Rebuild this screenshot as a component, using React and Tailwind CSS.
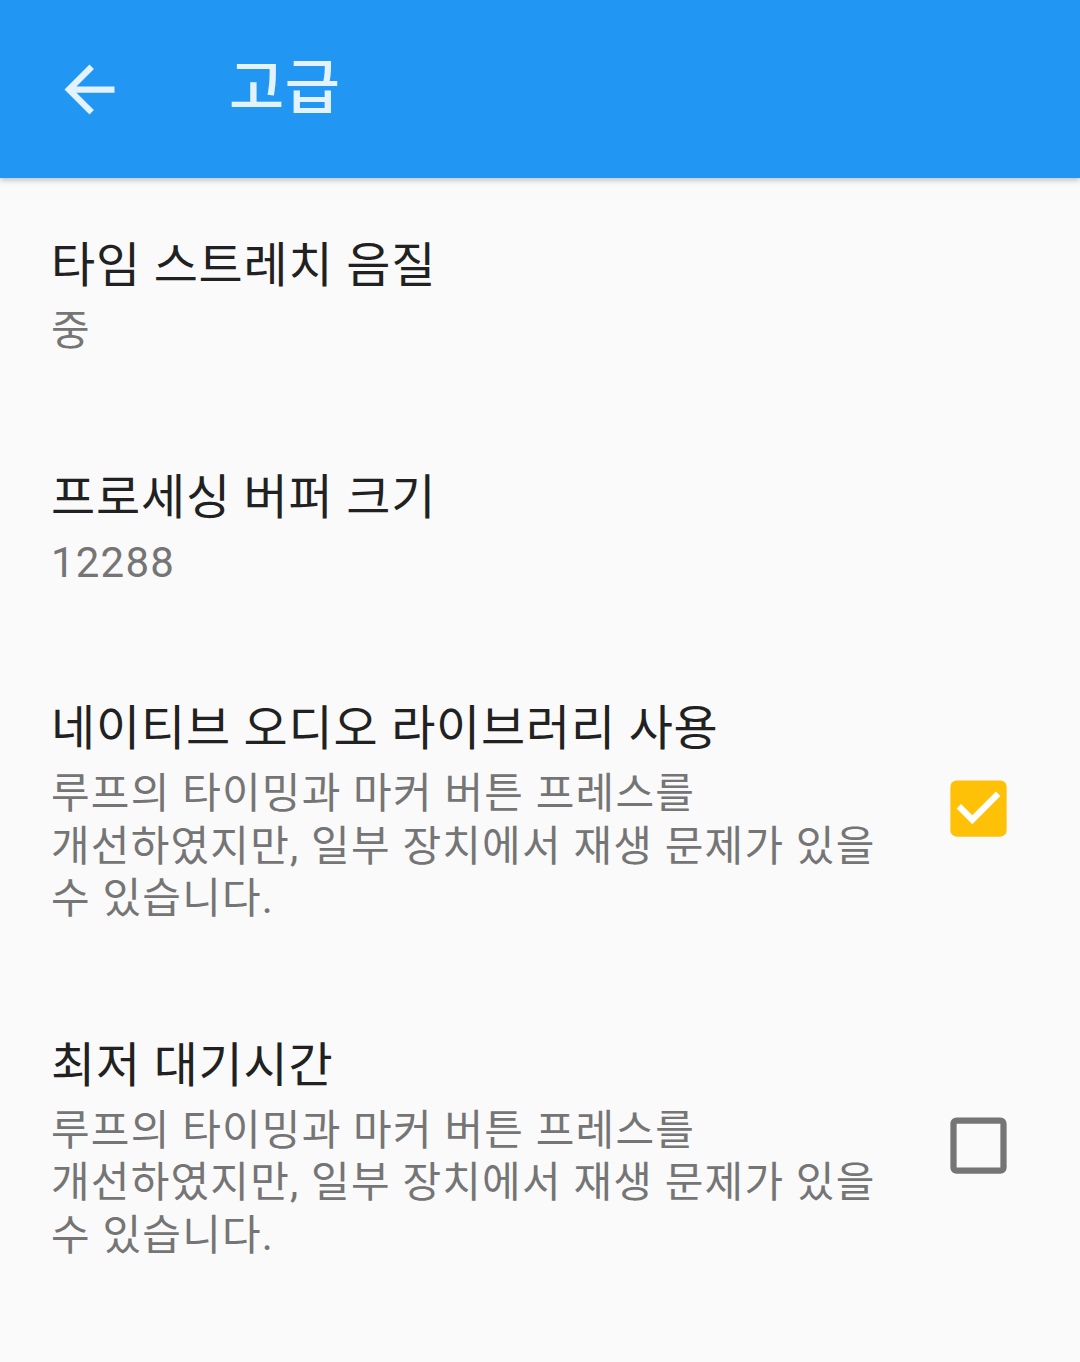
import React from 'react';

const FONT = { fontFamily: '"Roboto", "Noto Sans CJK KR", sans-serif' };

const CheckIcon = ({ checked }) => (
    <svg viewBox="0 0 24 24" className="w-[75px] h-[75px] shrink-0 mb-[7px]">
        {checked ? (
            <>
                <rect x="3" y="3" width="18" height="18" rx="2" fill="#FFC107" />
                <path d="M10 17l-5-5 1.41-1.41L10 14.17l7.59-7.59L19 8l-9 9z" fill="#FFFFFF" />
            </>
        ) : (
            <path
                d="M19 5v14H5V5h14m0-2H5c-1.1 0-2 .9-2 2v14c0 1.1.9 2 2 2h14c1.1 0 2-.9 2-2V5c0-1.1-.9-2-2-2z"
                fill="#757575"
            />
        )}
    </svg>
);

const Pref = ({ title, summary, checkbox, checked }) => (
    <div className="flex items-center pl-[51px] pr-[64px] py-[55px]">
        <div className="flex-1 min-w-0">
            <div className="text-[48px] leading-[60px] text-[#212121] tracking-[0.8px]">{title}</div>
            <div className="mt-[9px] text-[42px] leading-[52.5px] text-[#757575] tracking-[1.2px] max-w-[845px] break-keep">
                {summary}
            </div>
        </div>
        {checkbox && <CheckIcon checked={checked} />}
    </div>
);

const desc = '루프의 타이밍과 마커 버튼 프레스를 개선하였지만, 일부 장치에서 재생 문제가 있을 수 있습니다.';

export default function App() {
    return (
        <div className="w-[1080px] h-[1362px] bg-[#FAFAFA] overflow-hidden" style={FONT}>
            {/* 툴바 */}
            <div className="relative z-10 h-[178px] bg-[#2196F3] flex items-center shadow-[0_2px_6px_rgba(0,0,0,0.25)]">
                <svg viewBox="0 0 24 24" className="ml-[52px] w-[75px] h-[75px]">
                    <path d="M20 11H7.83l5.59-5.59L12 4l-8 8 8 8 1.41-1.41L7.83 13H20v-2z" fill="#E3F2FD" />
                </svg>
                <div className="ml-[102px] text-[60px] font-medium text-[#E3F2FD] tracking-[0.5px]">고급</div>
            </div>

            <div className="pt-[3px]">
                <Pref title="타임 스트레치 음질" summary="중" />
                <Pref title="프로세싱 버퍼 크기" summary="12288" />
                <Pref title="네이티브 오디오 라이브러리 사용" summary={desc} checkbox checked />
                <Pref title="최저 대기시간" summary={desc} checkbox checked={false} />
            </div>
        </div>
    );
}
